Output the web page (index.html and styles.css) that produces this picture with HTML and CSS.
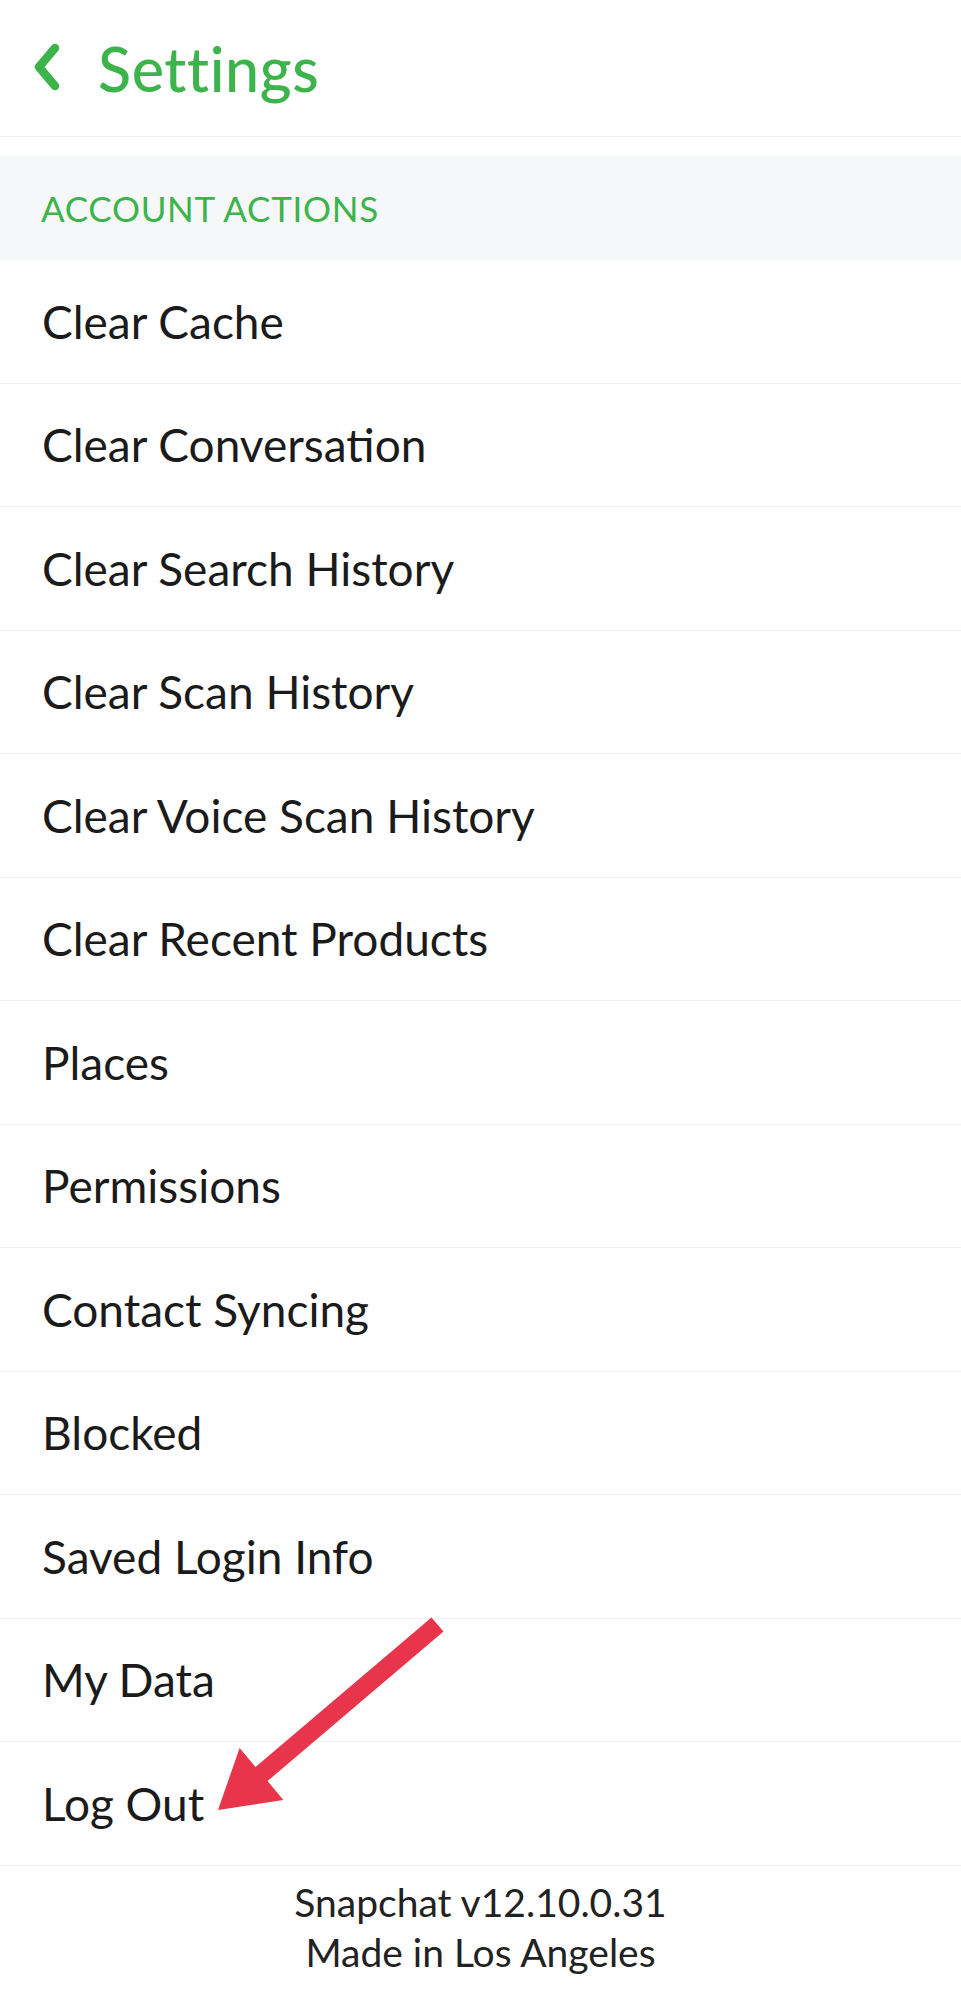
FILE: index.html
```html
<!DOCTYPE html>
<html lang="en">
<head>
<meta charset="utf-8">
<title>Settings</title>
<link rel="stylesheet" href="styles.css">
</head>
<body>
<div class="page">
  <header class="topbar">
    <svg class="back" width="40" height="56" viewBox="0 0 40 56" aria-hidden="true">
      <path d="M25 8 L9 27 L25 46" fill="none" stroke="#3cb44b" stroke-width="8.5" stroke-linecap="round" stroke-linejoin="round"/>
    </svg>
    <h1 class="title">Settings</h1>
  </header>
  <div class="spacer"></div>
  <div class="section-head">ACCOUNT ACTIONS</div>
  <ul class="list">
    <li class="row">Clear Cache</li>
    <li class="row">Clear Conversation</li>
    <li class="row">Clear Search History</li>
    <li class="row">Clear Scan History</li>
    <li class="row">Clear Voice Scan History</li>
    <li class="row">Clear Recent Products</li>
    <li class="row">Places</li>
    <li class="row">Permissions</li>
    <li class="row">Contact Syncing</li>
    <li class="row">Blocked</li>
    <li class="row">Saved Login Info</li>
    <li class="row">My Data</li>
    <li class="row">Log Out</li>
  </ul>
  <footer class="footer">
    <div>Snapchat v12.10.0.31</div>
    <div>Made in Los Angeles</div>
  </footer>
  <svg class="arrow" width="961" height="1999" viewBox="0 0 961 1999" aria-hidden="true">
    <polygon points="431.5,1617.4 443.5,1631.6 267.5,1781.1 283.4,1799.9 218,1810 239.6,1748.1 255.5,1766.9" fill="#e8354b"/>
  </svg>
</div>
</body>
</html>
```
FILE: styles.css
```css
html, body {
  margin: 0;
  padding: 0;
  background: #ffffff;
}
body {
  font-family: "Lato", "Noto Sans", sans-serif;
  color: #1b1b1b;
}
.page {
  position: relative;
  width: 961px;
  min-height: 1999px;
  overflow: hidden;
}
.topbar {
  height: 137px;
  box-sizing: border-box;
  border-bottom: 1.5px solid #f1f1f1;
  display: flex;
  align-items: center;
  padding-left: 30px;
  gap: 28px;
}
.back {
  display: block;
  flex: none;
}
.title {
  margin: 0;
  font-size: 61px;
  font-weight: 500;
  color: #3cb44b;
  letter-spacing: 0.6px;
}
.spacer {
  height: 19px;
}
.section-head {
  height: 104px;
  background: #f6f7f9;
  display: flex;
  align-items: center;
  padding-left: 41px;
  font-size: 35px;
  color: #3cb44b;
  letter-spacing: 0.7px;
}
.list {
  list-style: none;
  margin: 0;
  padding: 0;
}
.row {
  height: 123.5px;
  box-sizing: border-box;
  border-bottom: 1.5px solid #f0f0f0;
  display: flex;
  align-items: center;
  padding-left: 42px;
  font-size: 46px;
  letter-spacing: 0;
}
.footer {
  padding-top: 11px;
  text-align: center;
  font-size: 39px;
  line-height: 50px;
  color: #222222;
}
.arrow {
  position: absolute;
  left: 0;
  top: 0;
  pointer-events: none;
}
```
